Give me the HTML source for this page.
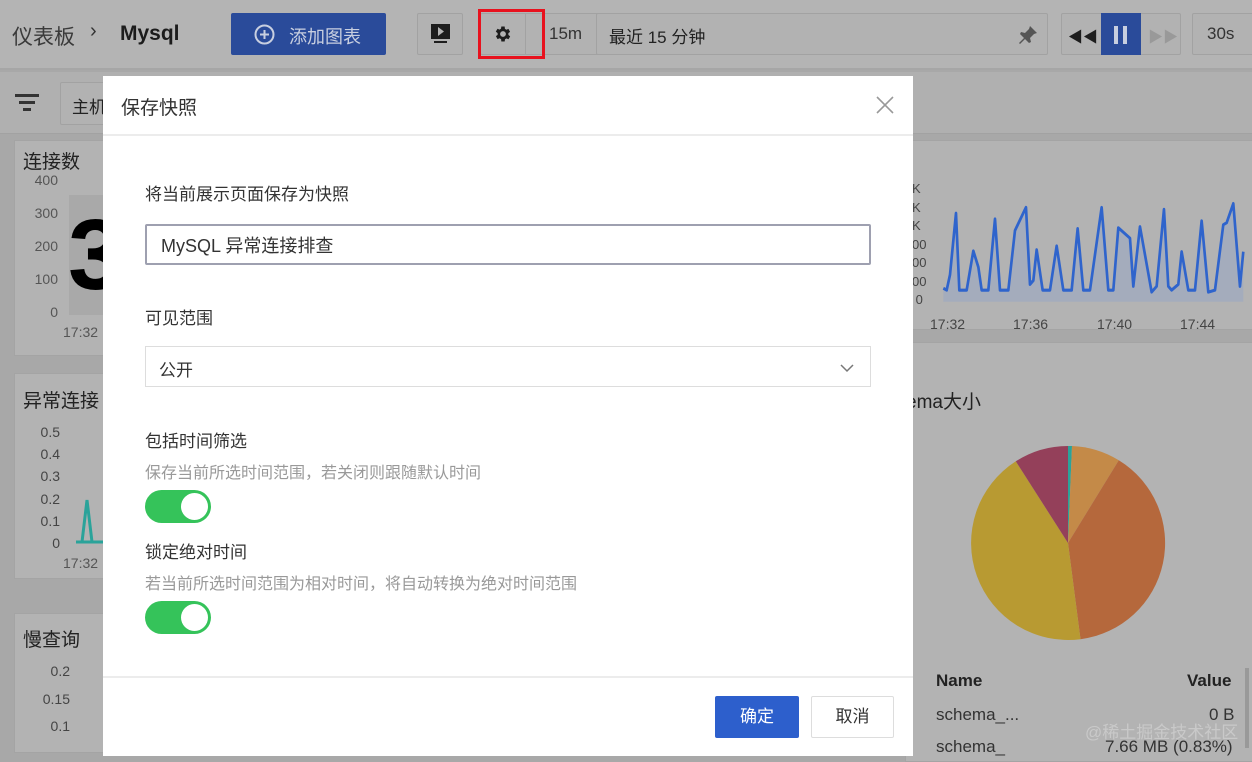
<!DOCTYPE html>
<html><head><meta charset="utf-8"><style>
*{box-sizing:border-box;margin:0;padding:0}
body{width:1252px;height:748px;overflow:hidden;position:relative;background:#a8a8a8;font-family:"Liberation Sans","Noto Sans CJK SC",sans-serif;color:#222}
.abs{position:absolute}
.top{left:0;top:0;width:1252px;height:70px;background:#b4b4b4;border-bottom:2px solid #a6a6a6}
.filt{left:0;top:72px;width:1252px;height:62px;background:#b0b0b0;border-bottom:1px solid #a2a2a2}
.box{position:absolute;border:1px solid #a2a2a2;background:#b2b2b2;border-radius:2px}
.card{position:absolute;background:#b3b3b3;border:1px solid #a4a4a4}
.t{position:absolute;white-space:nowrap}
.modal{left:103px;top:76px;width:810px;height:680px;background:#fff}
.lbl{font-size:17px;color:#333}
.sub{font-size:16px;color:#999}
.sw{position:absolute;width:66px;height:33px;border-radius:17px;background:#35c35a}
.sw:after{content:"";position:absolute;right:3px;top:3px;width:27px;height:27px;border-radius:50%;background:#fff}
</style></head><body>
<div class="abs top"></div>
<div class="t" style="left:12px;top:21px;font-size:21px;color:#3a3a3a">仪表板</div>
<div class="t" style="left:90px;top:20px;font-size:20px;color:#333">›</div>
<div class="t" style="left:120px;top:22px;font-size:21px;font-weight:bold;color:#1c1c1c">Mysql</div>
<div class="abs" style="left:231px;top:13px;width:155px;height:42px;background:#2a4b9a;border-radius:2px"></div>
<svg class="abs" style="left:254px;top:24px" width="21" height="21"><circle cx="10.5" cy="10.5" r="9" stroke="#c8cfe0" stroke-width="2" fill="none"/><path d="M10.5 6v9M6 10.5h9" stroke="#c8cfe0" stroke-width="2"/></svg>
<div class="t" style="left:289px;top:23px;font-size:18px;color:#c8cfe0">添加图表</div>
<div class="box" style="left:417px;top:13px;width:46px;height:42px"></div>
<svg class="abs" style="left:430px;top:23px" width="22" height="22" viewBox="0 0 22 22"><rect x="1" y="1" width="19" height="15" fill="#1d1d1d"/><path d="M8 4l6 4.5-6 4.5z" fill="#b4b4b4"/><rect x="4" y="18" width="13" height="2" fill="#1d1d1d"/></svg>
<div class="box" style="left:480px;top:13px;width:160px;height:42px"></div>
<div class="abs" style="left:525px;top:13px;width:1px;height:42px;background:#a2a2a2"></div>
<svg class="abs" style="left:493px;top:24px" width="20" height="20" viewBox="0 0 24 24"><path fill="#1d1d1d" d="M19.4 13a7.5 7.5 0 000-2l2.1-1.6-2-3.5-2.5 1a7.6 7.6 0 00-1.7-1L15 3h-4l-.4 2.7a7.6 7.6 0 00-1.7 1l-2.5-1-2 3.5L6.6 11a7.5 7.5 0 000 2l-2.1 1.6 2 3.5 2.5-1a7.6 7.6 0 001.7 1L11 21h4l.4-2.7a7.6 7.6 0 001.7-1l2.5 1 2-3.5zM13 15.5a3.5 3.5 0 110-7 3.5 3.5 0 010 7z" transform="translate(-1 0)"/></svg>
<div class="abs" style="left:478px;top:9px;width:67px;height:50px;border:3px solid #e8121e"></div>
<div class="t" style="left:549px;top:24px;font-size:17px;color:#333">15m</div>
<div class="box" style="left:596px;top:13px;width:452px;height:42px"></div>
<div class="t" style="left:609px;top:23px;font-size:17px;color:#222">最近 15 分钟</div>
<svg class="abs" style="left:1017px;top:24px" width="22" height="22" viewBox="0 0 22 22"><path d="M13 2l7 7-3 1-4 4 1 4-2 1-4-4-5 5-1-1 5-5-4-4 1-2 4 1 4-4z" fill="#555"/></svg>
<div class="box" style="left:1061px;top:13px;width:120px;height:42px"></div>
<div class="t" style="left:1068px;top:26px;font-size:15px;color:#1d1d1d">◀◀</div>
<div class="abs" style="left:1101px;top:13px;width:40px;height:42px;background:#2a4b9a"></div>
<div class="abs" style="left:1114px;top:26px;width:4px;height:18px;background:#c8cfe0"></div>
<div class="abs" style="left:1123px;top:26px;width:4px;height:18px;background:#c8cfe0"></div>
<div class="t" style="left:1148px;top:26px;font-size:15px;color:#999">▶▶</div>
<div class="box" style="left:1192px;top:13px;width:70px;height:42px"></div>
<div class="t" style="left:1207px;top:24px;font-size:17px;color:#333">30s</div>

<div class="abs filt"></div>
<div class="abs" style="left:15px;top:94px;width:24px;height:3px;background:#333"></div>
<div class="abs" style="left:19px;top:101px;width:16px;height:3px;background:#333"></div>
<div class="abs" style="left:23px;top:108px;width:8px;height:3px;background:#333"></div>
<div class="box" style="left:60px;top:82px;width:60px;height:43px"></div>
<div class="t" style="left:72px;top:93px;font-size:17px;color:#222">主机</div>

<div class="card" style="left:14px;top:140px;width:100px;height:216px"></div>
<div class="t" style="left:23px;top:147px;font-size:19px;color:#222">连接数</div>
<div class="t" style="left:32px;top:164px;font-size:14px;color:#555;line-height:33px;text-align:right;width:26px">400<br>300<br>200<br>100<br>0</div>
<div class="abs" style="left:69px;top:195px;width:40px;height:120px;background:#a9a9a9"></div>
<div class="t" style="left:68px;top:200px;font-size:100px;font-weight:bold;color:#000;line-height:110px">3</div>
<div class="t" style="left:63px;top:324px;font-size:14px;color:#555">17:32</div>

<div class="card" style="left:14px;top:373px;width:100px;height:206px"></div>
<div class="t" style="left:23px;top:386px;font-size:19px;color:#222">异常连接</div>
<div class="t" style="left:38px;top:421px;font-size:14px;color:#444;line-height:22.2px;text-align:right;width:22px">0.5<br>0.4<br>0.3<br>0.2<br>0.1<br>0</div>
<svg class="abs" style="left:75px;top:495px" width="30" height="50"><path d="M1 47h28M7 47l5-42 5 42" stroke="#2aa39a" stroke-width="3" fill="none"/></svg>
<div class="t" style="left:63px;top:555px;font-size:14px;color:#555">17:32</div>

<div class="card" style="left:14px;top:613px;width:100px;height:140px"></div>
<div class="t" style="left:23px;top:625px;font-size:19px;color:#222">慢查询</div>
<div class="t" style="left:38px;top:658px;font-size:14px;color:#444;line-height:27.5px;text-align:right;width:32px">0.2<br>0.15<br>0.1</div>

<div class="card" style="left:905px;top:140px;width:360px;height:190px"></div>
<div class="t" style="left:912px;top:180px;font-size:13px;color:#444;line-height:18.5px">K<br>K<br>K<br>00<br>00<br>00<br>&nbsp;0</div>
<svg class="abs" style="left:0;top:0" width="1252" height="748"><g transform="translate(900 140) scale(0.3333 0.385)"><path d="M130 385L140 390 150 350 168 190 178 390 200 390 220 288 235 330 245 390 265 390 285 205 300 390 325 390 345 235 378 175 390 375 400 365 410 285 428 390 450 390 470 275 490 390 515 390 533 230 550 390 570 390 605 175 625 390 640 390 655 228 690 255 700 380 720 225 755 395 770 380 792 180 805 380 815 390 835 375 845 290 865 390 885 390 905 210 925 395 945 390 970 220 980 215 1000 165 1020 380 1030 290L1030 420 130 420Z" fill="#a4acbc"/><path d="M130 385L140 390 150 350 168 190 178 390 200 390 220 288 235 330 245 390 265 390 285 205 300 390 325 390 345 235 378 175 390 375 400 365 410 285 428 390 450 390 470 275 490 390 515 390 533 230 550 390 570 390 605 175 625 390 640 390 655 228 690 255 700 380 720 225 755 395 770 380 792 180 805 380 815 390 835 375 845 290 865 390 885 390 905 210 925 395 945 390 970 220 980 215 1000 165 1020 380 1030 290" fill="none" stroke="#2f64cc" stroke-width="8" stroke-linejoin="round"/></g></svg>
<div class="t" style="left:930px;top:316px;font-size:14px;color:#444">17:32</div>
<div class="t" style="left:1013px;top:316px;font-size:14px;color:#444">17:36</div>
<div class="t" style="left:1097px;top:316px;font-size:14px;color:#444">17:40</div>
<div class="t" style="left:1180px;top:316px;font-size:14px;color:#444">17:44</div>

<div class="card" style="left:905px;top:342px;width:360px;height:420px"></div>
<div class="t" style="left:906px;top:387px;font-size:19px;color:#222">ema大小</div>
<svg class="abs" style="left:0;top:0" width="1252" height="748">
<g transform="translate(1068 543)">
<path d="M0 0L0 -97A97 97 0 0 1 4 -97Z" fill="#2aa39a"/>
<path d="M0 0L4 -97A97 97 0 0 1 50.8 -82.7Z" fill="#c48a48"/>
<path d="M0 0L50.8 -82.7A97 97 0 0 1 12.5 96.2Z" fill="#b5683c"/>
<path d="M0 0L12.5 96.2A97 97 0 0 1 -52.2 -81.7Z" fill="#b89a32"/>
<path d="M0 0L-52.2 -81.7A97 97 0 0 1 0 -97Z" fill="#94405a"/>
</g></svg>
<div class="t" style="left:936px;top:671px;font-size:17px;font-weight:bold;color:#222">Name</div>
<div class="t" style="left:1187px;top:671px;font-size:17px;font-weight:bold;color:#222">Value</div>
<div class="t" style="left:936px;top:705px;font-size:17px;color:#333">schema_...</div>
<div class="t" style="left:1209px;top:705px;font-size:17px;color:#333">0 B</div>
<div class="t" style="left:936px;top:737px;font-size:17px;color:#333">schema_</div>
<div class="t" style="left:1105px;top:737px;font-size:17px;color:#333">7.66 MB (0.83%)</div>
<div class="t" style="left:1085px;top:718px;font-size:17px;color:#c9c9c9">@稀土掘金技术社区</div>
<div class="abs" style="left:1245px;top:668px;width:4px;height:80px;background:#999"></div>

<div class="abs modal"></div>
<div class="t" style="left:121px;top:93px;font-size:19px;color:#333">保存快照</div>
<svg class="abs" style="left:875px;top:95px" width="20" height="20"><path d="M2 2L18 18M18 2L2 18" stroke="#999" stroke-width="1.6"/></svg>
<div class="abs" style="left:103px;top:134px;width:810px;height:2px;background:#ececec"></div>
<div class="t lbl" style="left:145px;top:180px">将当前展示页面保存为快照</div>
<div class="abs" style="left:145px;top:224px;width:726px;height:41px;border:2px solid #9ea0b0;border-radius:2px"></div>
<div class="t" style="left:161px;top:232px;font-size:18px;color:#333">MySQL 异常连接排查</div>
<div class="t lbl" style="left:145px;top:304px">可见范围</div>
<div class="abs" style="left:145px;top:346px;width:726px;height:41px;border:1px solid #ddd"></div>
<div class="t" style="left:159px;top:356px;font-size:17px;color:#333">公开</div>
<svg class="abs" style="left:839px;top:362px" width="16" height="12"><path d="M2 3l6 6 6-6" stroke="#777" stroke-width="1.5" fill="none"/></svg>
<div class="t lbl" style="left:145px;top:427px">包括时间筛选</div>
<div class="t sub" style="left:145px;top:459px">保存当前所选时间范围，若关闭则跟随默认时间</div>
<div class="sw" style="left:145px;top:490px"></div>
<div class="t lbl" style="left:145px;top:538px">锁定绝对时间</div>
<div class="t sub" style="left:145px;top:570px">若当前所选时间范围为相对时间，将自动转换为绝对时间范围</div>
<div class="sw" style="left:145px;top:601px"></div>
<div class="abs" style="left:103px;top:676px;width:810px;height:2px;background:#ececec"></div>
<div class="abs" style="left:715px;top:696px;width:84px;height:42px;background:#2d5fcc;border-radius:2px;color:#fff;font-size:17px;text-align:center;line-height:42px">确定</div>
<div class="abs" style="left:811px;top:696px;width:83px;height:42px;border:1px solid #ddd;border-radius:2px;color:#333;font-size:17px;text-align:center;line-height:40px">取消</div>
</body></html>
